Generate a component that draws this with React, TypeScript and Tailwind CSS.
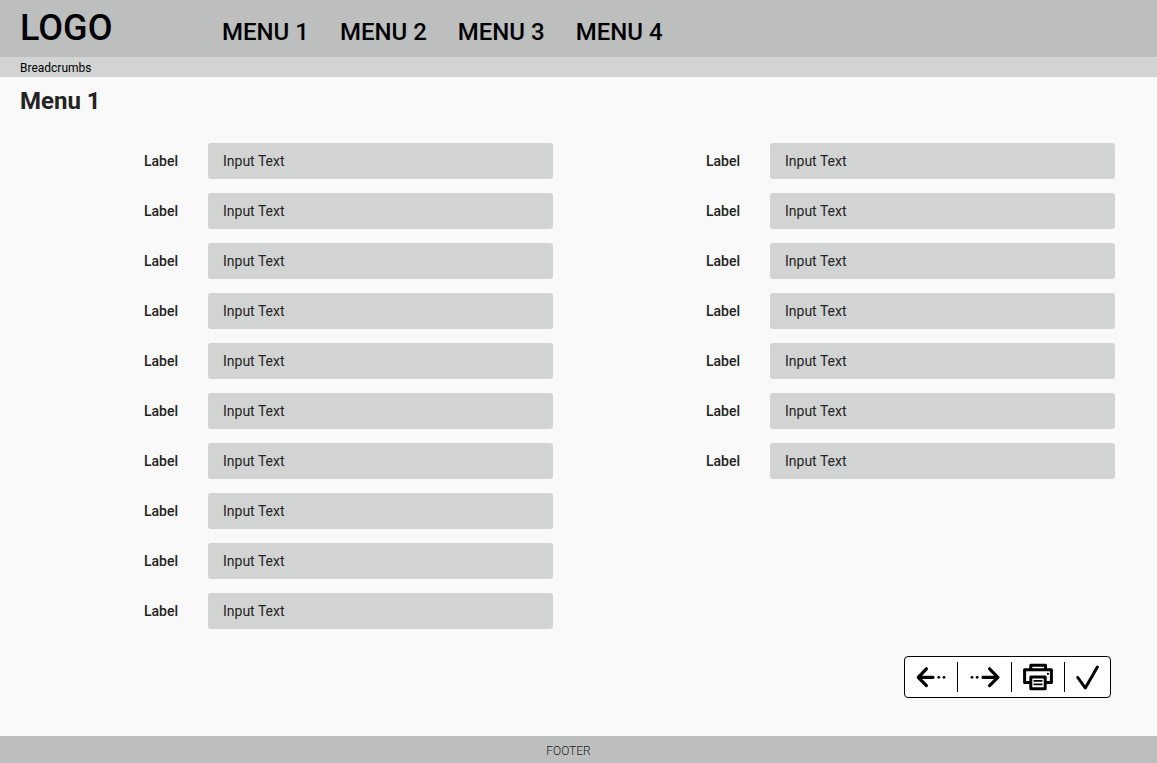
import { useId } from "react";

const menus = ["MENU 1", "MENU 2", "MENU 3", "MENU 4"];

function Field() {
  const id = useId();
  return (
    <div className="flex items-center">
      <label htmlFor={id} className="w-16 shrink-0 text-sm font-medium">
        Label
      </label>
      <input
        id={id}
        type="text"
        defaultValue="Input Text"
        className="h-9 min-w-0 flex-1 rounded-[3px] bg-[#d2d4d3] px-[15px] text-sm text-[#232323]"
      />
    </div>
  );
}

function FieldColumn({ count }: { count: number }) {
  return (
    <div className="flex flex-1 flex-col gap-3.5">
      {Array.from({ length: count }, (_, i) => (
        <Field key={i} />
      ))}
    </div>
  );
}

function BackIcon() {
  return (
    <svg width="30" height="22" viewBox="0 0 30 22" fill="none" stroke="#000" strokeWidth="3.2" strokeLinecap="round" strokeLinejoin="round">
      <path d="M10.4 2.8 2.3 11.3l8.1 8.3M2.5 11.3H17" />
      <circle cx="22.8" cy="11.3" r="1.4" fill="#000" stroke="none" />
      <circle cx="28" cy="11.3" r="1.4" fill="#000" stroke="none" />
    </svg>
  );
}

function ForwardIcon() {
  return (
    <svg width="30" height="22" viewBox="0 0 30 22" fill="none" stroke="#000" strokeWidth="3.2" strokeLinecap="round" strokeLinejoin="round">
      <path d="M19.6 2.8 27.9 11.3l-8.3 8.3M27.5 11.3H13" />
      <circle cx="7.2" cy="11.3" r="1.4" fill="#000" stroke="none" />
      <circle cx="2" cy="11.3" r="1.4" fill="#000" stroke="none" />
    </svg>
  );
}

function PrintIcon() {
  return (
    <svg width="30" height="28" viewBox="0 0 30 28" fill="none" stroke="#000" strokeWidth="3" strokeLinejoin="round">
      <path d="M7.8 6.5v-4.3h14.7v4.3" />
      <path d="M7.8 19.5H1.6V6.7h26.8v12.8h-6.2" />
      <path d="M7.8 13.9h14.4v11.8H7.8z" />
      <path d="M10.5 17.9h9M10.5 21.4h9" strokeWidth="1.7" />
      <circle cx="24.9" cy="10.9" r="1.1" fill="#000" stroke="none" />
    </svg>
  );
}

function CheckIcon() {
  return (
    <svg width="24" height="26" viewBox="0 0 24 26" fill="none" stroke="#000" strokeWidth="3" strokeLinecap="round" strokeLinejoin="round">
      <path d="M1.8 13.5 9.3 24 21.4 3" />
    </svg>
  );
}

export default function App() {
  return (
    <div className="flex min-h-screen flex-col bg-[#f9f9f9] font-[Roboto,sans-serif] text-[#232323]">
      <header className="flex h-[57px] items-baseline bg-[#bdbfbe] px-5 pt-2 text-black">
        <a href="#" className="w-[202px] shrink-0 text-4xl leading-10 font-medium">
          LOGO
        </a>
        <nav className="flex gap-[31px] text-2xl font-medium">
          {menus.map((menu) => (
            <a key={menu} href="#">
              {menu}
            </a>
          ))}
        </nav>
      </header>
      <nav aria-label="Breadcrumbs" className="flex h-5 items-center bg-[#d2d4d3] px-5 pt-0.5 text-xs text-black">
        Breadcrumbs
      </nav>
      <main className="flex flex-1 flex-col">
        <h1 className="px-5 pt-2 text-2xl font-bold">Menu 1</h1>
        <form className="flex items-start gap-[153px] pt-[26px] pr-[42px] pl-36">
          <FieldColumn count={10} />
          <FieldColumn count={7} />
        </form>
        <div className="mt-[27px] mr-[46px] flex h-[42px] items-center self-end rounded-[4px] border border-black bg-white">
          <button type="button" aria-label="Previous" className="flex h-[30px] w-[53px] items-center justify-center border-r border-black">
            <BackIcon />
          </button>
          <button type="button" aria-label="Next" className="flex h-[30px] w-[54px] items-center justify-center border-r border-black">
            <ForwardIcon />
          </button>
          <button type="button" aria-label="Print" className="flex h-[30px] w-[53px] items-center justify-center border-r border-black">
            <PrintIcon />
          </button>
          <button type="button" aria-label="Confirm" className="flex h-[30px] w-[45px] items-center justify-center">
            <CheckIcon />
          </button>
        </div>
      </main>
      <footer className="flex h-[27px] items-center justify-center bg-[#bdbfbe] pt-0.5 pr-5 text-xs font-light">
        FOOTER
      </footer>
    </div>
  );
}
